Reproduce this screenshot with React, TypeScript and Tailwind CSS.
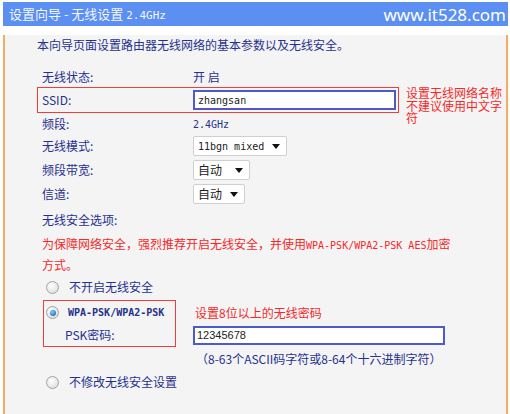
const navy = "text-[#26318f]";
const red = "text-[#f5282a]";
const cjk = "font-['Noto_Sans_CJK_SC',sans-serif]";
const mono = "font-['DejaVu_Sans_Mono',monospace]";

function Caret() {
  return (
    <svg width="8" height="5" viewBox="0 0 8 5" aria-hidden="true">
      <path d="M0 0h8L4 5z" fill="#111" />
    </svg>
  );
}

function Select({ label, width, isMono }: { label: string; width: string; isMono?: boolean }) {
  return (
    <div
      className={`flex h-[20px] items-center justify-between rounded-[2px] border border-[#cfcfcf] bg-white pl-[4px] pr-[6px] text-[#222] ${width}`}
    >
      <span className={isMono ? `${mono} text-[10px]` : `${cjk} text-[12px]`}>{label}</span>
      <Caret />
    </div>
  );
}

function Radio({ checked }: { checked?: boolean }) {
  return (
    <span className="flex h-[13px] w-[13px] items-center justify-center rounded-full border border-[#a3a3a3] bg-[radial-gradient(circle_at_40%_35%,#ffffff,#d6d6d6)]">
      {checked && (
        <span className="h-[6px] w-[6px] rounded-full bg-[radial-gradient(circle_at_40%_35%,#7fd0ff,#0a4f9c)]" />
      )}
    </span>
  );
}

function Row({ label, height, children }: { label: string; height: string; children?: React.ReactNode }) {
  return (
    <div className={`flex items-center pl-[37px] ${height}`}>
      <span className={`w-[151px] ${navy}`}>{label}</span>
      {children}
    </div>
  );
}

export default function App() {
  return (
    <div className={`h-[414px] w-[510px] bg-white pl-[3px] pt-[2px] text-[12px] ${cjk}`}>
      <div className="w-[505px]">
        <div className="flex h-[24px] items-center justify-between bg-[#5b8ff1] pl-[6px] pr-[2px] text-white">
          <span className="text-[13px] text-white/95">
            设置向导 - 无线设置 <span className={`${mono} text-[11px]`}>2.4GHz</span>
          </span>
          <span className="font-['Noto_Sans',sans-serif] text-[17px] leading-none">www.it528.com</span>
        </div>

        <div className="h-[387px] border-x-2 border-b-2 border-[#f6aa62] bg-[#f4f4f4]">
          <div className={`mt-[9px] flex h-[20px] items-center pl-[32px] ${navy}`}>
            本向导页面设置路由器无线网络的基本参数以及无线安全。
          </div>

          <div className="mt-[12px]">
            <Row label="无线状态:" height="h-[20px]">
              <span className={navy}>开 启</span>
            </Row>
          </div>

          <div className="flex h-[26px] items-start">
            <div className="ml-[32px] flex h-[26px] w-[362px] items-center border border-[#f03c3c] pl-[4px]">
              <span className={`w-[151px] ${navy}`}>SSID:</span>
              <div className="flex h-[20px] w-[203px] items-center border-2 border-[#4c5bc6] bg-white px-[3px]">
                <span className={`${mono} text-[10px] text-[#222]`}>zhangsan</span>
              </div>
            </div>
            <div className={`ml-[7px] w-[98px] leading-[12.5px] ${red}`}>设置无线网络名称不建议使用中文字符</div>
          </div>

          <Row label="频段:" height="h-[22px]">
            <span className={`${mono} text-[10px] ${navy}`}>2.4GHz</span>
          </Row>
          <Row label="无线模式:" height="h-[22px]">
            <Select label="11bgn mixed" width="w-[94px]" isMono />
          </Row>
          <Row label="频段带宽:" height="h-[26px]">
            <Select label="自动" width="w-[57px]" />
          </Row>
          <Row label="信道:" height="h-[22px]">
            <Select label="自动" width="w-[52px]" />
          </Row>

          <div className={`flex h-[29px] items-center pl-[37px] ${navy}`}>无线安全选项:</div>
          <div className={`pl-[37px] leading-[19px] ${red}`}>
            <div>
              为保障网络安全，强烈推荐开启无线安全，并使用
              <span className={`${mono} text-[10px]`}>WPA-PSK/WPA2-PSK AES</span>加密
            </div>
            <div>方式。</div>
          </div>

          <div className="flex h-[26px] items-center pl-[41px]">
            <Radio />
            <span className={`ml-[10px] ${navy}`}>不开启无线安全</span>
          </div>

          <div className="flex h-[47px]">
            <div className="ml-[38px] h-[47px] w-[133px] border border-[#f03c3c]">
              <div className="flex h-[23px] items-center pl-[2px]">
                <Radio checked />
                <span className={`ml-[9px] ${mono} text-[10px] font-bold ${navy}`}>WPA-PSK/WPA2-PSK</span>
              </div>
              <div className={`flex h-[22px] items-center pl-[21px] ${navy}`}>PSK密码:</div>
            </div>
            <div className="ml-[17px] pt-[1px]">
              <div className={`flex h-[23px] items-center pl-[2px] ${red}`}>设置8位以上的无线密码</div>
              <div className="flex h-[22px] items-center">
                <div className="flex h-[19px] w-[252px] items-center border-2 border-[#4c5bc6] bg-white px-[2px]">
                  <span className="font-['Liberation_Sans',sans-serif] text-[11px] text-[#222]">12345678</span>
                </div>
              </div>
            </div>
          </div>

          <div className={`flex h-[24px] items-center pl-[191px] ${navy}`}>
            （8-63个ASCII码字符或8-64个十六进制字符）
          </div>

          <div className="flex h-[22px] items-center pl-[41px]">
            <Radio />
            <span className={`ml-[10px] ${navy}`}>不修改无线安全设置</span>
          </div>
        </div>
      </div>
    </div>
  );
}
